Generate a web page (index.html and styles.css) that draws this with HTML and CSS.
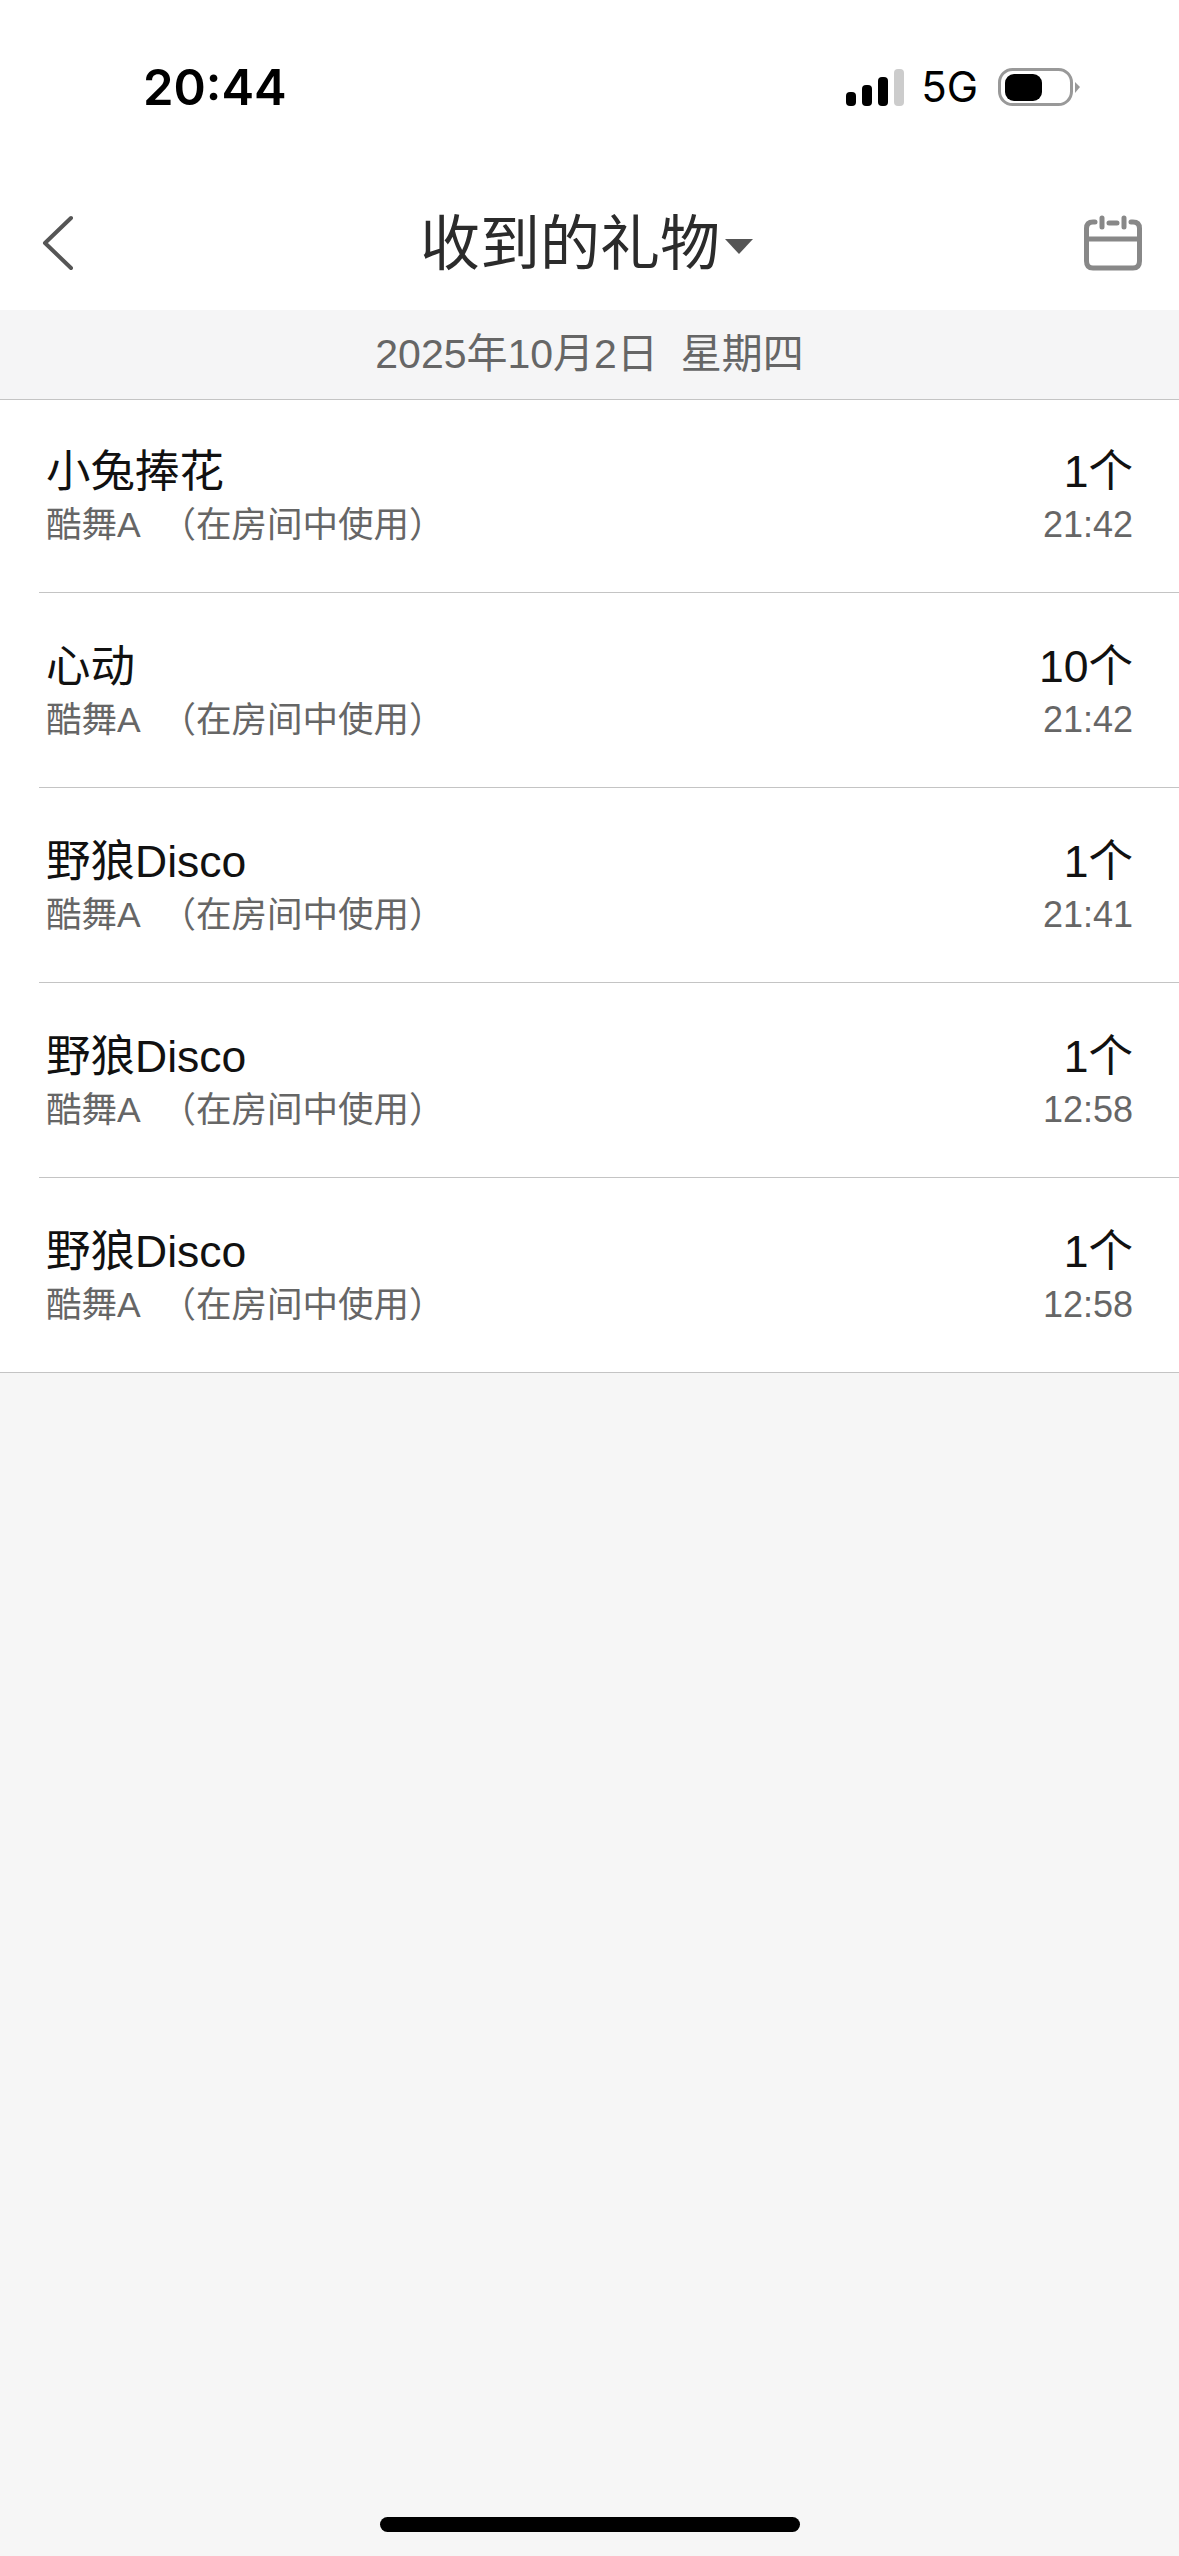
FILE: index.html
```html
<!DOCTYPE html>
<html lang="zh-CN">
<head>
    <meta charset="UTF-8">
    <meta name="viewport" content="width=device-width, initial-scale=1.0">
    <title>收到的礼物</title>
    <link rel="stylesheet" href="styles.css">
</head>
<body>
    <div class="status-bar">
        <div class="time">20:44</div>
        <div class="status-icons">
            <svg class="signal" width="58" height="37" viewBox="0 0 58 37">
                <rect x="0" y="23" width="10" height="14" rx="4" fill="#000"/>
                <rect x="16" y="16" width="10" height="21" rx="4" fill="#000"/>
                <rect x="32" y="8" width="10" height="29" rx="4" fill="#000"/>
                <rect x="48" y="0" width="10" height="37" rx="4" fill="#ccc"/>
            </svg>
            <span class="network">5G</span>
            <svg class="battery" width="83" height="38" viewBox="0 0 83 38">
                <rect x="1.5" y="1.5" width="72" height="35" rx="13" fill="none" stroke="#999" stroke-width="3"/>
                <rect x="7" y="6" width="37" height="27" rx="9" fill="#000"/>
                <path d="M77 14 L82 19 L77 25 Z" fill="#999"/>
            </svg>
        </div>
    </div>

    <header class="nav">
        <svg class="back" width="34" height="56" viewBox="0 0 34 56">
            <path d="M30 3 L4 28 L30 53" fill="none" stroke="#555" stroke-width="4" stroke-linecap="round" stroke-linejoin="round"/>
        </svg>
        <div class="nav-title">
            <h1>收到的礼物</h1>
            <span class="caret"></span>
        </div>
        <svg class="calendar" width="58" height="56" viewBox="0 0 58 56">
            <path d="M11 7 H9 Q2.500 7 2.500 13.500 V46 Q2.500 53 9 53 H49 Q55.500 53 55.500 46 V13.500 Q55.500 7 49 7 H47" fill="none" stroke="#888" stroke-width="5" stroke-linecap="round"/>
            <path d="M3 24 H55" fill="none" stroke="#888" stroke-width="5"/>
            <path d="M18 3 V12 M40 3 V12 M25 8 H33" fill="none" stroke="#888" stroke-width="5" stroke-linecap="round"/>
        </svg>
    </header>

    <div class="date-band">2025年10月2日&nbsp; 星期四</div>

    <main class="gift-list">
        <div class="gift-row">
            <div class="gift-info">
                <div class="gift-name">小兔捧花</div>
                <div class="gift-from">酷舞A&nbsp; （在房间中使用）</div>
            </div>
            <div class="gift-meta">
                <div class="gift-count">1个</div>
                <div class="gift-time">21:42</div>
            </div>
        </div>
        <div class="gift-row">
            <div class="gift-info">
                <div class="gift-name">心动</div>
                <div class="gift-from">酷舞A&nbsp; （在房间中使用）</div>
            </div>
            <div class="gift-meta">
                <div class="gift-count">10个</div>
                <div class="gift-time">21:42</div>
            </div>
        </div>
        <div class="gift-row">
            <div class="gift-info">
                <div class="gift-name">野狼Disco</div>
                <div class="gift-from">酷舞A&nbsp; （在房间中使用）</div>
            </div>
            <div class="gift-meta">
                <div class="gift-count">1个</div>
                <div class="gift-time">21:41</div>
            </div>
        </div>
        <div class="gift-row">
            <div class="gift-info">
                <div class="gift-name">野狼Disco</div>
                <div class="gift-from">酷舞A&nbsp; （在房间中使用）</div>
            </div>
            <div class="gift-meta">
                <div class="gift-count">1个</div>
                <div class="gift-time">12:58</div>
            </div>
        </div>
        <div class="gift-row">
            <div class="gift-info">
                <div class="gift-name">野狼Disco</div>
                <div class="gift-from">酷舞A&nbsp; （在房间中使用）</div>
            </div>
            <div class="gift-meta">
                <div class="gift-count">1个</div>
                <div class="gift-time">12:58</div>
            </div>
        </div>
    </main>

    <div class="home-indicator"></div>
</body>
</html>
```

FILE: styles.css
```css
html, body {
    height: 100%;
}

body {
    margin: 0;
    display: flex;
    flex-direction: column;
    font-family: "Liberation Sans", "Noto Sans CJK SC", sans-serif;
    background-color: #f6f6f6;
    color: #111;
}

.status-bar {
    display: flex;
    justify-content: space-between;
    align-items: flex-start;
    height: 170px;
    padding: 0 98px 0 143px;
    background-color: #fff;
    box-sizing: border-box;
}

.time {
    margin-top: 58px;
    font-family: Inter, sans-serif;
    font-size: 49px;
    line-height: 60px;
    font-weight: 600;
    color: #000;
}

.status-icons {
    display: flex;
    align-items: flex-start;
    margin-top: 68px;
}

.signal {
    display: block;
    margin: 1px 17px 0 0;
}

.network {
    font-family: Inter, sans-serif;
    font-size: 42px;
    line-height: 44px;
    color: #000;
    margin: -3px 20px 0 0;
}

.battery {
    display: block;
}

.nav {
    display: flex;
    justify-content: space-between;
    align-items: center;
    height: 140px;
    padding: 5px 37px 0 41px;
    background-color: #fff;
    box-sizing: border-box;
}

.nav-title {
    display: flex;
    align-items: center;
    margin: 4px 0 0 14px;
}

.nav-title h1 {
    margin: 0;
    font-size: 60px;
    line-height: 70px;
    font-weight: 400;
    color: #2b2b2b;
}

.caret {
    width: 0;
    height: 0;
    margin: 4px 0 0 5px;
    border-left: 14px solid transparent;
    border-right: 14px solid transparent;
    border-top: 15px solid #555;
}

.date-band {
    height: 89px;
    line-height: 89px;
    text-align: center;
    font-size: 41px;
    color: #666;
    background-color: #f5f5f6;
    border-bottom: 1px solid #c4c4c4;
}

.gift-list {
    background-color: #fff;
    border-bottom: 1px solid #c4c4c4;
}

.gift-row {
    display: flex;
    justify-content: space-between;
    align-items: flex-end;
    height: 195px;
    margin-left: 39px;
    padding: 0 46px 41px 7px;
    border-bottom: 1px solid #c4c4c4;
    box-sizing: border-box;
}

.gift-row:first-child {
    height: 193px;
}

.gift-row:last-child {
    border-bottom: none;
    height: 194px;
}

.gift-name,
.gift-count {
    font-size: 44.5px;
    line-height: 54px;
    color: #111;
}

.gift-from,
.gift-time {
    font-size: 36px;
    line-height: 52px;
    color: #666;
}

.gift-from {
    font-size: 35.5px;
}

.gift-meta {
    text-align: right;
}

.home-indicator {
    width: 420px;
    height: 15px;
    margin: auto auto 24px;
    border-radius: 8px;
    background-color: #000;
}
```
